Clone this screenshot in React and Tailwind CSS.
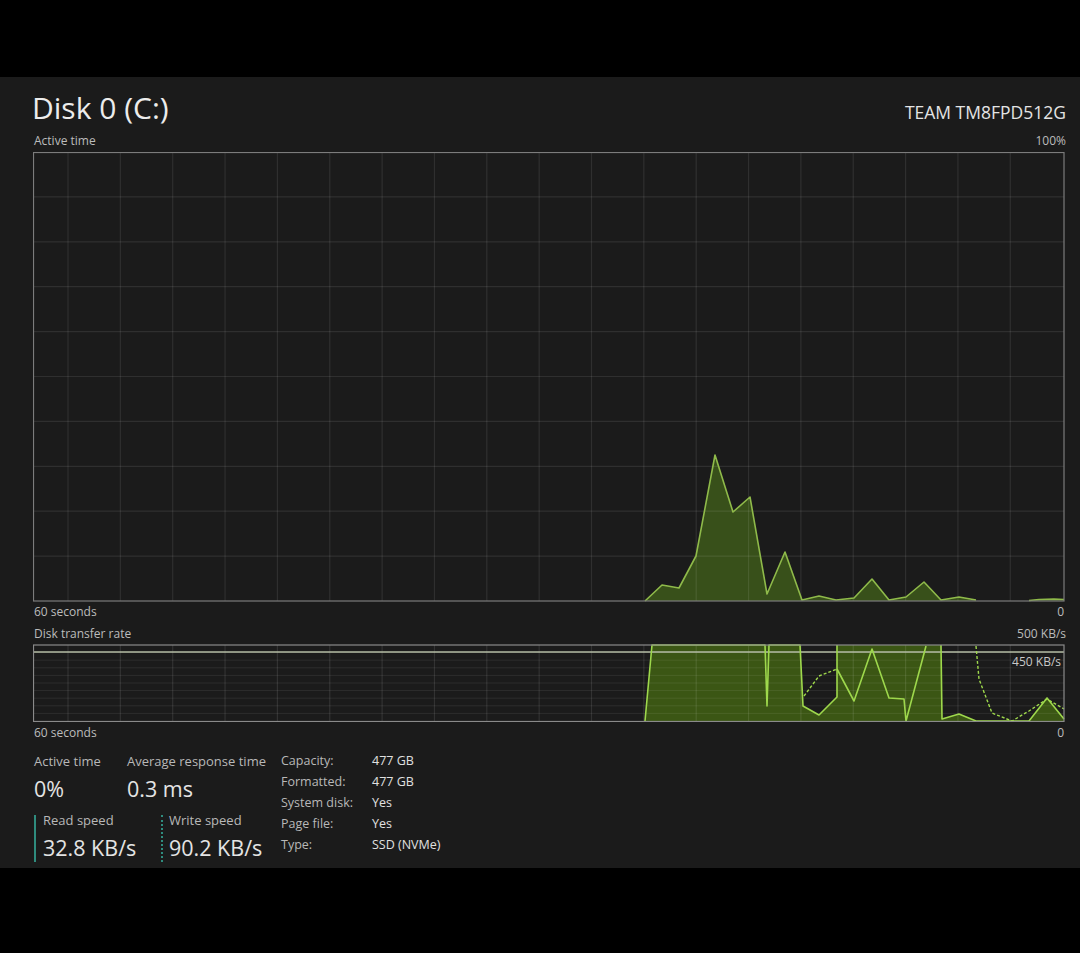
const FONT = { fontFamily: '"Open Sans", "Noto Sans", sans-serif' };

const vLines = Array.from({ length: 19 }, (_, i) => 69 + i * 52.35);

const activePts = [
  [646, 601], [663, 585], [680, 588], [697, 556], [716, 455], [734, 512],
  [751, 497], [768, 594], [786, 552], [803, 600], [820, 596], [837, 600],
  [855, 598], [873, 579], [890, 600], [907, 597], [925, 582], [942, 600],
  [960, 597], [977, 600],
];

const toStr = (pts) => pts.map((p) => p.join(',')).join(' ');

const ActiveGraph = () => (
  <svg width="1032" height="450" viewBox="34 152 1032 450" className="block">
    <polygon
      points={toStr([...activePts, [977, 601], [646, 601]])}
      fill="#38501a"
    />
    <polygon points="1030,601 1040,599.5 1055,599 1065,599.5 1065,601" fill="#38501a" />
    {vLines.map((x) => (
      <line key={x} x1={x} x2={x} y1={152} y2={601} stroke="rgba(255,255,255,0.09)" strokeWidth="1.2" />
    ))}
    {Array.from({ length: 9 }, (_, i) => 152 + (i + 1) * 44.9).map((y) => (
      <line key={y} x1={34} x2={1065} y1={y} y2={y} stroke="rgba(255,255,255,0.09)" strokeWidth="1.2" />
    ))}
    <polyline points={toStr(activePts)} fill="none" stroke="#8fba4a" strokeWidth="1.6" strokeLinejoin="round" />
    <polyline points="1030,600.5 1040,599.5 1055,599 1065,599.5" fill="none" stroke="#8fba4a" strokeWidth="1.4" />
    <rect x="34.5" y="152.5" width="1030.5" height="448.5" fill="none" stroke="#7c7c7c" strokeWidth="1.2" />
  </svg>
);

const fillPts = [
  [646, 721], [653, 645], [801, 645], [804, 706], [820, 715], [838, 697],
  [838, 645], [942, 645], [943, 719], [960, 714], [977, 721], [1030, 721],
  [1048, 698], [1065, 719], [1065, 721],
];

const TransferGraph = () => (
  <svg width="1032" height="78" viewBox="34 644 1032 78" className="block">
    <polygon points={toStr(fillPts)} fill="#3b5614" />
    {vLines.map((x) => (
      <line key={x} x1={x} x2={x} y1={645} y2={721} stroke="rgba(255,255,255,0.1)" strokeWidth="1.2" />
    ))}
    {Array.from({ length: 9 }, (_, i) => 645 + (i + 1) * 7.6).map((y) => (
      <line key={y} x1={34} x2={1065} y1={y} y2={y} stroke="rgba(255,255,255,0.08)" strokeWidth="1" />
    ))}
    <line x1={34} x2={1065} y1={652} y2={652} stroke="#b4bda4" strokeWidth="1.4" />
    {/* read speed */}
    <polyline
      points="646,721 653,645 766,645 768,706 770,645 801,645 804,706 820,715 838,697 838,645"
      fill="none" stroke="#9ed84c" strokeWidth="1.6" strokeLinejoin="round"
    />
    <polyline
      points="838,669 855,701 873,649 890,698 905,699 907,721 927,646"
      fill="none" stroke="#9ed84c" strokeWidth="1.6" strokeLinejoin="round"
    />
    <polyline points="942,645 943,719 960,714 977,721 1030,721 1048,698 1065,719" fill="none" stroke="#9ed84c" strokeWidth="1.6" strokeLinejoin="round" />
    {/* write speed */}
    <polyline
      points="805,696 820,676 838,669"
      fill="none" stroke="#9ed84c" strokeWidth="1.4" strokeDasharray="3 2"
    />
    <polyline
      points="977,646 980,679 993,713 1013,721 1030,711 1048,699 1065,709"
      fill="none" stroke="#9ed84c" strokeWidth="1.4" strokeDasharray="3 2"
    />
    <rect x="34.5" y="645" width="1030.5" height="76.5" fill="none" stroke="#8a8a8a" strokeWidth="1.2" />
  </svg>
);

const Stat = ({ label, value }) => (
  <div className="flex flex-col">
    <span className="text-[13px] leading-[16px] text-[#b8b8b8]">{label}</span>
    <span className="text-[21.5px] leading-[29px] text-[#e4e4e4] mt-[5px]">{value}</span>
  </div>
);

const info = [
  ['Capacity:', '477 GB'],
  ['Formatted:', '477 GB'],
  ['System disk:', 'Yes'],
  ['Page file:', 'Yes'],
  ['Type:', 'SSD (NVMe)'],
];

export default function App() {
  return (
    <div className="w-[1080px] h-[953px] bg-black flex flex-col" style={FONT}>
      <div className="h-[77px]" />
      <div className="h-[791px] bg-[#1b1b1b] pl-[34px] pr-[14px] flex flex-col">
        <div className="flex justify-between items-end h-[49px]">
          <span className="text-[30px] leading-[36px] text-[#ececec] -ml-[2px]">Disk 0 (C:)</span>
          <span className="text-[17.5px] leading-[22px] text-[#e4e4e4] mb-[3px]">TEAM TM8FPD512G</span>
        </div>
        <div className="flex justify-between text-[12px] leading-[14px] text-[#bcbcbc] mt-[8px]">
          <span>Active time</span>
          <span>100%</span>
        </div>
        <div className="mt-[4px] -ml-[1px]">
          <ActiveGraph />
        </div>
        <div className="flex justify-between text-[12px] leading-[14px] text-[#bcbcbc] mt-[3px]">
          <span>60 seconds</span>
          <span className="pr-[2px]">0</span>
        </div>
        <div className="flex justify-between text-[12px] leading-[14px] text-[#bcbcbc] mt-[8px]">
          <span>Disk transfer rate</span>
          <span>500 KB/s</span>
        </div>
        <div className="relative mt-[3px] -ml-[1px]">
          <TransferGraph />
          <span className="absolute right-[5px] top-[11px] text-[12px] leading-[14px] text-[#c8c8c8]">450 KB/s</span>
        </div>
        <div className="flex justify-between text-[12px] leading-[14px] text-[#bcbcbc] mt-[4px]">
          <span>60 seconds</span>
          <span className="pr-[2px]">0</span>
        </div>
        <div className="flex mt-[13px]">
          <div className="flex flex-col w-[247px]">
            <div className="flex">
              <div className="w-[93px]">
                <Stat label="Active time" value="0%" />
              </div>
              <Stat label="Average response time" value="0.3 ms" />
            </div>
            <div className="flex mt-[9px]">
              <div className="w-[127px] flex">
                <div className="w-[2px] h-[47px] bg-[#2f8c7e] mr-[7px] mt-[3px]" />
                <Stat label="Read speed" value="32.8 KB/s" />
              </div>
              <div className="flex">
                <div className="w-0 h-[47px] border-l-2 border-dotted border-[#2f8c7e] mr-[6px] mt-[3px]" />
                <Stat label="Write speed" value="90.2 KB/s" />
              </div>
            </div>
          </div>
          <div className="flex flex-col">
            {info.map(([k, v]) => (
              <div key={k} className="flex h-[21px] text-[12.5px] leading-[16px]">
                <span className="w-[91px] text-[#b8b8b8]">{k}</span>
                <span className="text-[#e0e0e0]">{v}</span>
              </div>
            ))}
          </div>
        </div>
      </div>
    </div>
  );
}
